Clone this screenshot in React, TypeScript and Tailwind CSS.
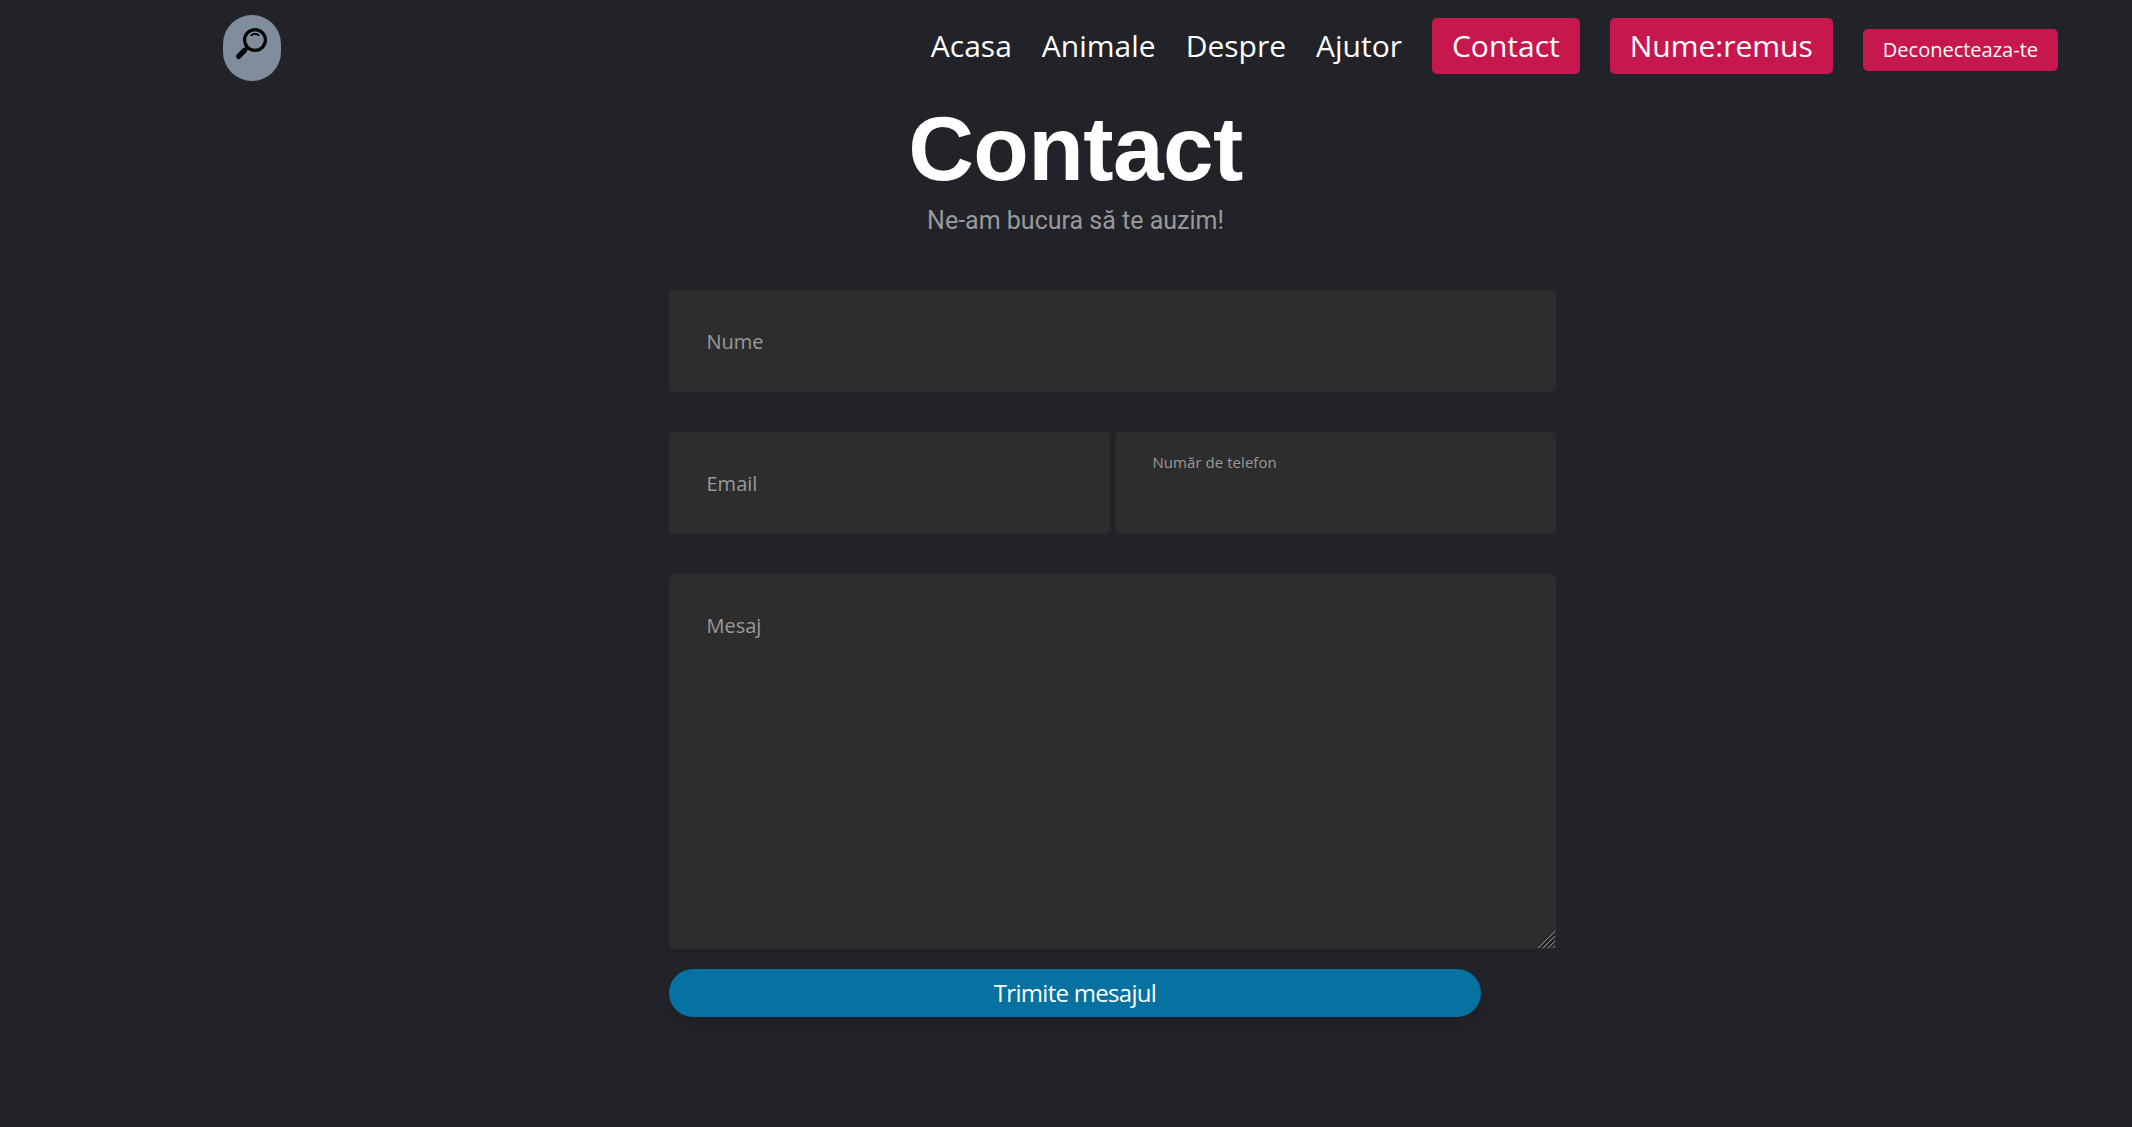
const links = ["Acasa", "Animale", "Despre", "Ajutor"];

const pill = "rounded-[5px] bg-[#c7184e] px-5 pt-[6.5px] pb-[8.5px] text-white";
const field = "rounded-[5px] bg-[#2d2d2d] px-[37.5px] text-[#999999]";

function SearchIcon() {
  return (
    <svg viewBox="0 0 58 66" className="h-[66px] w-[58px]" fill="none" stroke="#000" strokeLinecap="round">
      <circle cx="32" cy="25" r="10.4" strokeWidth="3.2" />
      <path d="M28.4 20.2Q32 17.6 35.6 20.2" strokeWidth="1.8" />
      <path d="M23.8 33.2L21.8 35.2" strokeWidth="3" />
      <path d="M21.8 35.2L15.6 41.4" strokeWidth="5.2" />
    </svg>
  );
}

function Header() {
  return (
    <header className="flex h-[104px] items-start justify-between pr-[74px] pl-[223px]">
      <button className="mt-[15px] h-[66px] w-[58px] rounded-full bg-[#7f8d9c]" aria-label="Cauta">
        <SearchIcon />
      </button>
      <nav className="mt-[18px] flex items-baseline gap-[30px] text-[30px] leading-[41px] text-white">
        {links.map((l) => (
          <a key={l} href="#">{l}</a>
        ))}
        <a href="#" className={pill}>Contact</a>
        <a href="#" className={pill}>Nume:remus</a>
        <button className={`${pill} text-[20px] leading-[27px]`}>Deconecteaza-te</button>
      </nav>
    </header>
  );
}

function ResizeGrip() {
  return (
    <svg viewBox="0 0 18 18" className="absolute right-0 bottom-0 h-[18px] w-[18px]" fill="none" shapeRendering="crispEdges">
      <path d="M0 17L17 0M5 17L17 5M10 17L17 10M15 17L17 15" stroke="#1c1c1c" strokeWidth="1" transform="translate(-1 -1)" />
      <path d="M0 17L17 0M5 17L17 5M10 17L17 10M15 17L17 15" stroke="#8f8f8f" strokeWidth="1" />
    </svg>
  );
}

export default function App() {
  return (
    <div className="flex h-[1127px] w-full flex-col overflow-hidden bg-[#222328] font-['Open_Sans',sans-serif]">
      <Header />
      <main className="flex grow flex-col">
        <div className="flex w-[2151px] flex-col items-center">
          <h1 className="font-['Liberation_Sans',sans-serif] text-[91px] leading-[90px] font-bold tracking-[-0.6px] text-white">Contact</h1>
          <p className="mt-2.5 font-['Roboto',sans-serif] text-[25px] leading-[34px] text-[#999999]">Ne-am bucura să te auzim!</p>
        </div>
        <form className="mt-[52px] ml-[669px] flex w-[887px] flex-col items-start text-[20px] leading-[27px]">
          <div className={`${field} h-[102px] w-full pt-[38px]`}>Nume</div>
          <div className="mt-10 flex w-full gap-[5px]">
            <div className={`${field} h-[102px] flex-1 pt-[38px]`}>Email</div>
            <div className={`${field} h-[102px] flex-1 pt-5 text-[15px] leading-5 tracking-[0.05px]`}>Număr de telefon</div>
          </div>
          <div className={`${field} relative mt-10 h-[375px] w-full pt-[38px]`}>
            Mesaj
            <ResizeGrip />
          </div>
          <button className="mt-5 h-12 w-[812px] rounded-full bg-[#0572a1] text-[24px] leading-[48px] tracking-[-0.7px] text-white shadow-[0_4px_8px_rgba(0,0,0,0.1)]">
            Trimite mesajul
          </button>
        </form>
      </main>
      <footer className="h-px bg-[#231f20]" />
    </div>
  );
}
